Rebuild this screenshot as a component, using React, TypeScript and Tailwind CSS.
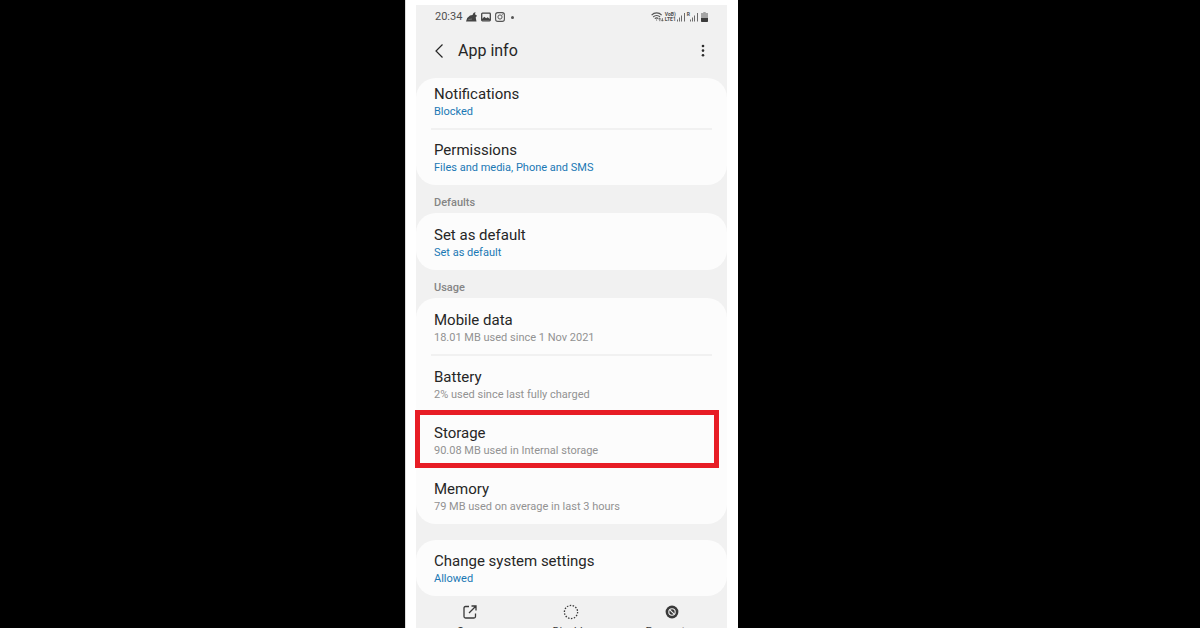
import type { ReactNode } from 'react';

type RowProps = {
  title: string;
  detail: string;
  link?: boolean;
  highlighted?: boolean;
  className?: string;
};

function Row({ title, detail, link, highlighted, className = 'pt-3' }: RowProps) {
  return (
    <button type="button" className={`relative block w-full pl-[18px] pr-4 pb-2 text-left ${className}`}>
      <span className="block text-[15px] leading-[19px] text-[#262626]">{title}</span>
      <span className={`block text-[11px] leading-4 ${link ? 'text-[#1a78b4]' : 'text-[#929292]'}`}>{detail}</span>
      {highlighted && (
        <span className="absolute -top-[2px] right-2 -bottom-px -left-px border-[5px] border-[#e71d25]" />
      )}
    </button>
  );
}

function Divider({ hidden }: { hidden?: boolean }) {
  return <div className={`mx-[15px] ${hidden ? 'h-px' : 'h-[2px] bg-[#f1f1f1]'}`} />;
}

function Card({ children, className = '' }: { children: ReactNode; className?: string }) {
  return <section className={`rounded-[20px] bg-[#fcfcfc] ${className}`}>{children}</section>;
}

function SectionTitle({ children }: { children: ReactNode }) {
  return <h2 className="pl-[18px] pt-[10px] pb-[2px] text-[11px] leading-4 font-medium text-[#858585]">{children}</h2>;
}

function SignalBars() {
  return (
    <svg className="h-[10px] w-[8px]" viewBox="0 0 8 10" fill="#6c6c6c">
      <rect x="0" y="7.5" width="1" height="2" />
      <rect x="2" y="5.5" width="1" height="4" />
      <rect x="4" y="3.5" width="1" height="6" />
      <rect x="7" y="1" width="1" height="8.5" />
    </svg>
  );
}

function StatusBar() {
  return (
    <div className="flex h-6 items-center justify-between px-[19px] text-[#4f4f4f]">
      <div className="flex items-center gap-1">
        <span className="text-[11px] leading-4">20:34</span>
        <svg className="h-[10px] w-[11px]" viewBox="0 0 11 10" fill="#444">
          <path d="M0 9.5 1.200 6 4 3.500l2.500-.500L7.500 1 9.500 0 9 2.200 11 3.700 9.700 5.500 10.500 9.500z" />
          <path d="M2.500 7.500 6 7" stroke="#999" strokeWidth="0.600" />
        </svg>
        <svg className="h-[10px] w-[10px]" viewBox="0 0 10 10" fill="none">
          <rect x="0.700" y="1.200" width="8.600" height="7.600" rx="0.800" stroke="#444" strokeWidth="1.300" />
          <path d="M1 8.200V7l2.300-2.300 1.800 1.600 1.500-1.100L9 7v1.200z" fill="#444" />
        </svg>
        <svg className="h-[10px] w-[10px]" viewBox="0 0 10 10" fill="none" stroke="#555">
          <rect x="0.600" y="0.600" width="8.800" height="8.800" rx="2.200" strokeWidth="1.100" />
          <circle cx="5" cy="5" r="2.100" strokeWidth="1" />
          <circle cx="7.500" cy="2.500" r="0.300" strokeWidth="0.600" />
        </svg>
        <span className="ml-[2px] h-[3px] w-[3px] rounded-full bg-[#555]" />
      </div>
      <div className="flex items-center gap-px">
        <svg className="h-[10px] w-[13px]" viewBox="0 0 13 10" fill="none" stroke="#555" strokeWidth="1.200">
          <path d="M.6 3.200C3.400.2 8 .2 10.600 3.200M2.200 5c1.900-2 5-2 6.800 0M3.800 6.700c1-1 2.600-1 3.600 0" />
          <path d="M5.600 7.400v1.200M8.800 9.200V6.400M7.800 7.400l1-1.200 1 1.200M11.400 6.200V9M10.400 8l1 1.200 1-1.200" strokeWidth="0.800" />
        </svg>
        <span className="flex flex-col text-[5px] leading-[5px] font-bold">
          <span>VoB)</span>
          <span>LTE1</span>
        </span>
        <SignalBars />
        <span className="ml-px flex items-start">
          <span className="text-[5px] leading-[5px] font-bold">R</span>
          <SignalBars />
        </span>
        <svg className="ml-[2px] h-[10px] w-[7px]" viewBox="0 0 7 10">
          <path d="M2.300 0h2.400v1H7v5H0V1h2.300z" fill="#a5a5a5" />
          <path d="M0 6h7v3.200q0 .8-.8.8H.8Q0 10 0 9.200z" fill="#3c3c3c" />
        </svg>
      </div>
    </div>
  );
}

function Header() {
  return (
    <header className="flex h-[49px] items-start justify-between pt-3 pl-[18px] pr-[14px] text-[#262626]">
      <div className="flex items-center gap-[14px]">
        <button type="button" aria-label="Back" className="flex h-5 w-[10px] items-center">
          <svg className="h-[14px] w-[10px]" viewBox="0 0 10 14" fill="none" stroke="currentColor" strokeWidth="1.200">
            <path d="M8.500 0.500 2 7l6.500 6.500" />
          </svg>
        </button>
        <h1 className="text-[16px] leading-5 font-normal">App info</h1>
      </div>
      <button type="button" aria-label="More options" className="flex h-5 w-5 items-center justify-center">
        <svg className="h-[14px] w-[4px]" viewBox="0 0 4 14" fill="#2b2b2b">
          <circle cx="2" cy="2" r="1.300" />
          <circle cx="2" cy="6.600" r="1.300" />
          <circle cx="2" cy="11.200" r="1.300" />
        </svg>
      </button>
    </header>
  );
}

function Action({ label, children }: { label: string; children: ReactNode }) {
  return (
    <button type="button" className="flex flex-1 flex-col items-center gap-1 text-[#3a3a3a]">
      <svg className="h-4 w-4" viewBox="0 0 16 16" fill="none" stroke="currentColor">
        {children}
      </svg>
      <span className="text-[11px] leading-4">{label}</span>
    </button>
  );
}

export default function App() {
  return (
    <div className="flex h-screen justify-center overflow-hidden bg-black pl-px sm:pr-[58px] font-[Roboto,sans-serif]">
      <div className="w-full max-w-[333px] border-l border-[#dcdcdc] bg-white pt-[5px] pr-[11px] pl-[10px]">
        <main className="min-h-full bg-[#f1f1f1]">
          <StatusBar />
          <Header />

          <Card className="pb-px">
            <Row title="Notifications" detail="Blocked" link className="pt-[7px]" />
            <Divider />
            <Row title="Permissions" detail="Files and media, Phone and SMS" link className="pt-[11px]" />
          </Card>

          <SectionTitle>Defaults</SectionTitle>
          <Card className="py-px">
            <Row title="Set as default" detail="Set as default" link />
          </Card>

          <SectionTitle>Usage</SectionTitle>
          <Card className="mb-4 py-px">
            <Row title="Mobile data" detail="18.01 MB used since 1 Nov 2021" />
            <Divider />
            <Row title="Battery" detail="2% used since last fully charged" />
            <Divider hidden />
            <Row title="Storage" detail="90.08 MB used in Internal storage" highlighted />
            <Divider hidden />
            <Row title="Memory" detail="79 MB used on average in last 3 hours" />
          </Card>

          <Card className="pb-px">
            <Row title="Change system settings" detail="Allowed" link />
          </Card>

          {/* Bottom actions */}
          <nav className="flex pt-2 pr-[5px] pl-[3px]">
            <Action label="Open">
              <path d="M7 2.500H3.500Q2 2.500 2 4v8.500Q2 14 3.500 14H12q1.500 0 1.500-1.500V9.500M9.500 2h4.500v4.500M14 2 7 9" strokeWidth="1.300" />
            </Action>
            <Action label="Disable">
              <circle cx="8" cy="8" r="6.600" strokeWidth="1.300" strokeDasharray="1.500 1.460" />
            </Action>
            <Action label="Force stop">
              <circle cx="8" cy="8" r="6.400" fill="currentColor" stroke="none" />
              <circle cx="8" cy="8" r="3.200" stroke="#f1f1f1" strokeWidth="1.100" />
              <path d="m5.800 5.800 4.400 4.400" stroke="#f1f1f1" strokeWidth="1.100" />
            </Action>
          </nav>
        </main>
      </div>
    </div>
  );
}
